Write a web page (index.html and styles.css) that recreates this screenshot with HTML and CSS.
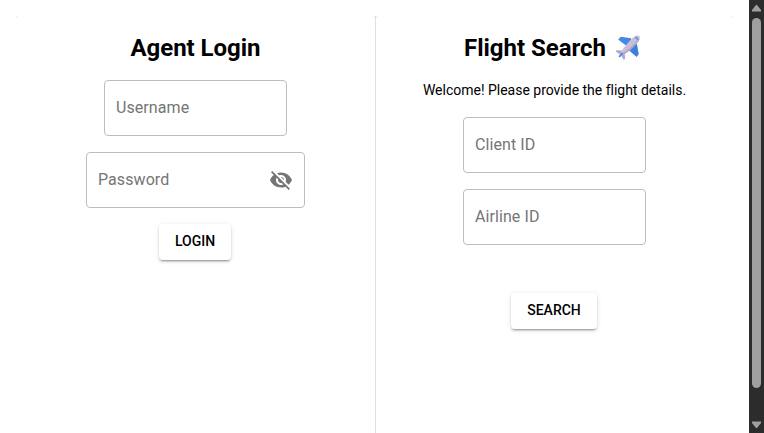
FILE: index.html
```html
<!DOCTYPE html>
<html lang="en">
<head>
<meta charset="utf-8">
<title>Flight Search</title>
<link rel="stylesheet" href="styles.css">
</head>
<body>
<main class="panels">
  <section class="panel panel-login">
    <h1 class="title">Agent Login</h1>
    <label class="field"><span class="label">Username</span></label>
    <label class="field field-wide"><span class="label">Password</span>
      <svg class="eye" viewBox="0 0 24 24"><path d="M12 7c2.76 0 5 2.24 5 5 0 .65-.13 1.26-.36 1.83l2.92 2.92c1.51-1.26 2.7-2.89 3.43-4.75-1.73-4.39-6-7.5-11-7.5-1.4 0-2.74.25-3.98.7l2.16 2.16C10.74 7.13 11.35 7 12 7zM2 4.27l2.28 2.28.46.46C3.08 8.3 1.78 10.02 1 12c1.73 4.39 6 7.5 11 7.5 1.55 0 3.03-.3 4.38-.84l.42.42L19.73 22 21 20.73 3.27 3 2 4.27zM7.53 9.8l1.55 1.55c-.05.21-.08.43-.08.65 0 1.66 1.34 3 3 3 .22 0 .44-.03.65-.08l1.55 1.55c-.67.33-1.41.53-2.2.53-2.76 0-5-2.24-5-5 0-.79.2-1.53.53-2.2zm4.31-.78l3.15 3.15.02-.16c0-1.66-1.34-3-3-3l-.17.01z"/></svg>
    </label>
    <button class="button">LOGIN</button>
  </section>
  <section class="panel panel-search">
    <h1 class="title">Flight Search
      <svg class="plane" viewBox="0 0 24 24">
        <path d="M3 4.2 5.6 1.6 15.5 3 15 8 10.5 10z" fill="#4389e3"/>
        <path d="M13 14.5 16 9 21 8.5 22.8 18.3 20.8 21.2z" fill="#3f7fdc"/>
        <path d="M.5 15.5 2 14.3 7 15.2 9.3 18 9.8 22.6 8.5 24 5.6 19.5z" fill="#b7a4cf"/>
        <path d="M4.4 19.8C5.4 15.2 12.2 7 18 2 20.2.3 22.6.2 23.4 1c.8 1 .2 3.6-1 5.2C18 11.8 10.2 18.6 5 20.6z" fill="#cbbedb"/>
        <path d="M7.2 17.8C12.5 14.5 18.5 8.8 23.4 3.4c-.1 1-.4 1.9-1 2.8C17.5 12.2 10.5 18.4 5.2 20.5z" fill="#b3a5c6"/>
        <path d="m3.3 20.6 3.4-4 1.2 1.1-3.4 4z" fill="#4389e3"/>
        <path d="m19 2.3 1.2-.8 2.7 2.5-.9 1.1z" fill="#4a91dc"/>
      </svg>
    </h1>
    <p class="welcome">Welcome! Please provide the flight details.</p>
    <label class="field"><span class="label">Client ID</span></label>
    <label class="field"><span class="label">Airline ID</span></label>
    <button class="button button-search">SEARCH</button>
  </section>
</main>
<aside class="scrollbar">
  <svg class="arrow" viewBox="0 0 15 17"><path d="M7 5h1l4 5v1.5H3V10z"/></svg>
  <div class="thumb"></div>
  <svg class="arrow arrow-down" viewBox="0 0 15 17"><path d="M7 5h1l4 5v1.5H3V10z"/></svg>
</aside>
</body>
</html>
```
FILE: styles.css
```css
* { box-sizing: border-box; }

body {
  display: flex;
  height: 433px;
  margin: 0;
  overflow: hidden;
  background: #fff;
  color: #000;
  font-family: Roboto, sans-serif;
}

.panels {
  display: flex;
  flex: 1;
  padding: 16px 16px 0;
  background: #fff;
}

/* Faint rounded corners at the top of each panel */
.panel {
  display: flex;
  flex-direction: column;
  align-items: center;
  background:
    radial-gradient(circle at 4px 4px, transparent 3.6px, #f0f0f0 4.4px) left top / 3px 3px no-repeat,
    radial-gradient(circle at -1px 4px, transparent 3.6px, #f0f0f0 4.4px) right top / 3px 3px no-repeat;
}

.panel-login { width: 359px; }

.panel-search {
  width: 358px;
  border-left: 1px solid #e0e0e0;
}

.title {
  display: flex;
  align-items: center;
  gap: 9px;
  height: 32px;
  margin: 16px 0;
  font-size: 24px;
  font-weight: 700;
  line-height: 32px;
  letter-spacing: -0.03px;
  white-space: nowrap;
}

.plane {
  width: 25px;
  height: 25px;
  margin: -1px 5px 0 0;
}

.welcome {
  height: 20px;
  margin: 0 0 17px;
  font-size: 14px;
  line-height: 20px;
  letter-spacing: -0.01px;
  white-space: nowrap;
}

.field {
  display: flex;
  align-items: center;
  justify-content: space-between;
  width: 183px;
  height: 56px;
  margin-bottom: 16px;
  padding: 0 11px;
  border: 1px solid #bdbdbd;
  border-radius: 4px;
  color: #757575;
  font-size: 16px;
  letter-spacing: 0.08px;
}

.label { margin-top: -1px; }

.field-wide { width: 219px; }

.eye {
  width: 24px;
  height: 24px;
  fill: #757575;
}

.button {
  width: 72px;
  height: 36px;
  margin-right: 1px;
  padding: 0 0 1px;
  border: 0;
  border-radius: 4px;
  background: #fff;
  box-shadow: 0 3px 1px -2px rgba(0, 0, 0, 0.2), 0 2px 2px rgba(0, 0, 0, 0.14), 0 1px 5px rgba(0, 0, 0, 0.12);
  color: #000;
  font: 500 14px/35px Roboto, sans-serif;
}

.button-search {
  width: 86px;
  margin-top: 32px;
}

.scrollbar {
  display: flex;
  flex-direction: column;
  align-items: center;
  width: 15px;
  background: #2c2c2c;
}

.arrow {
  width: 15px;
  height: 17px;
  fill: #9f9f9f;
}

.arrow-down {
  margin-top: auto;
  transform: rotate(180deg);
}

.thumb {
  width: 9px;
  height: 370px;
  margin-top: 1px;
  border-radius: 5px;
  background: #9f9f9f;
}
```
